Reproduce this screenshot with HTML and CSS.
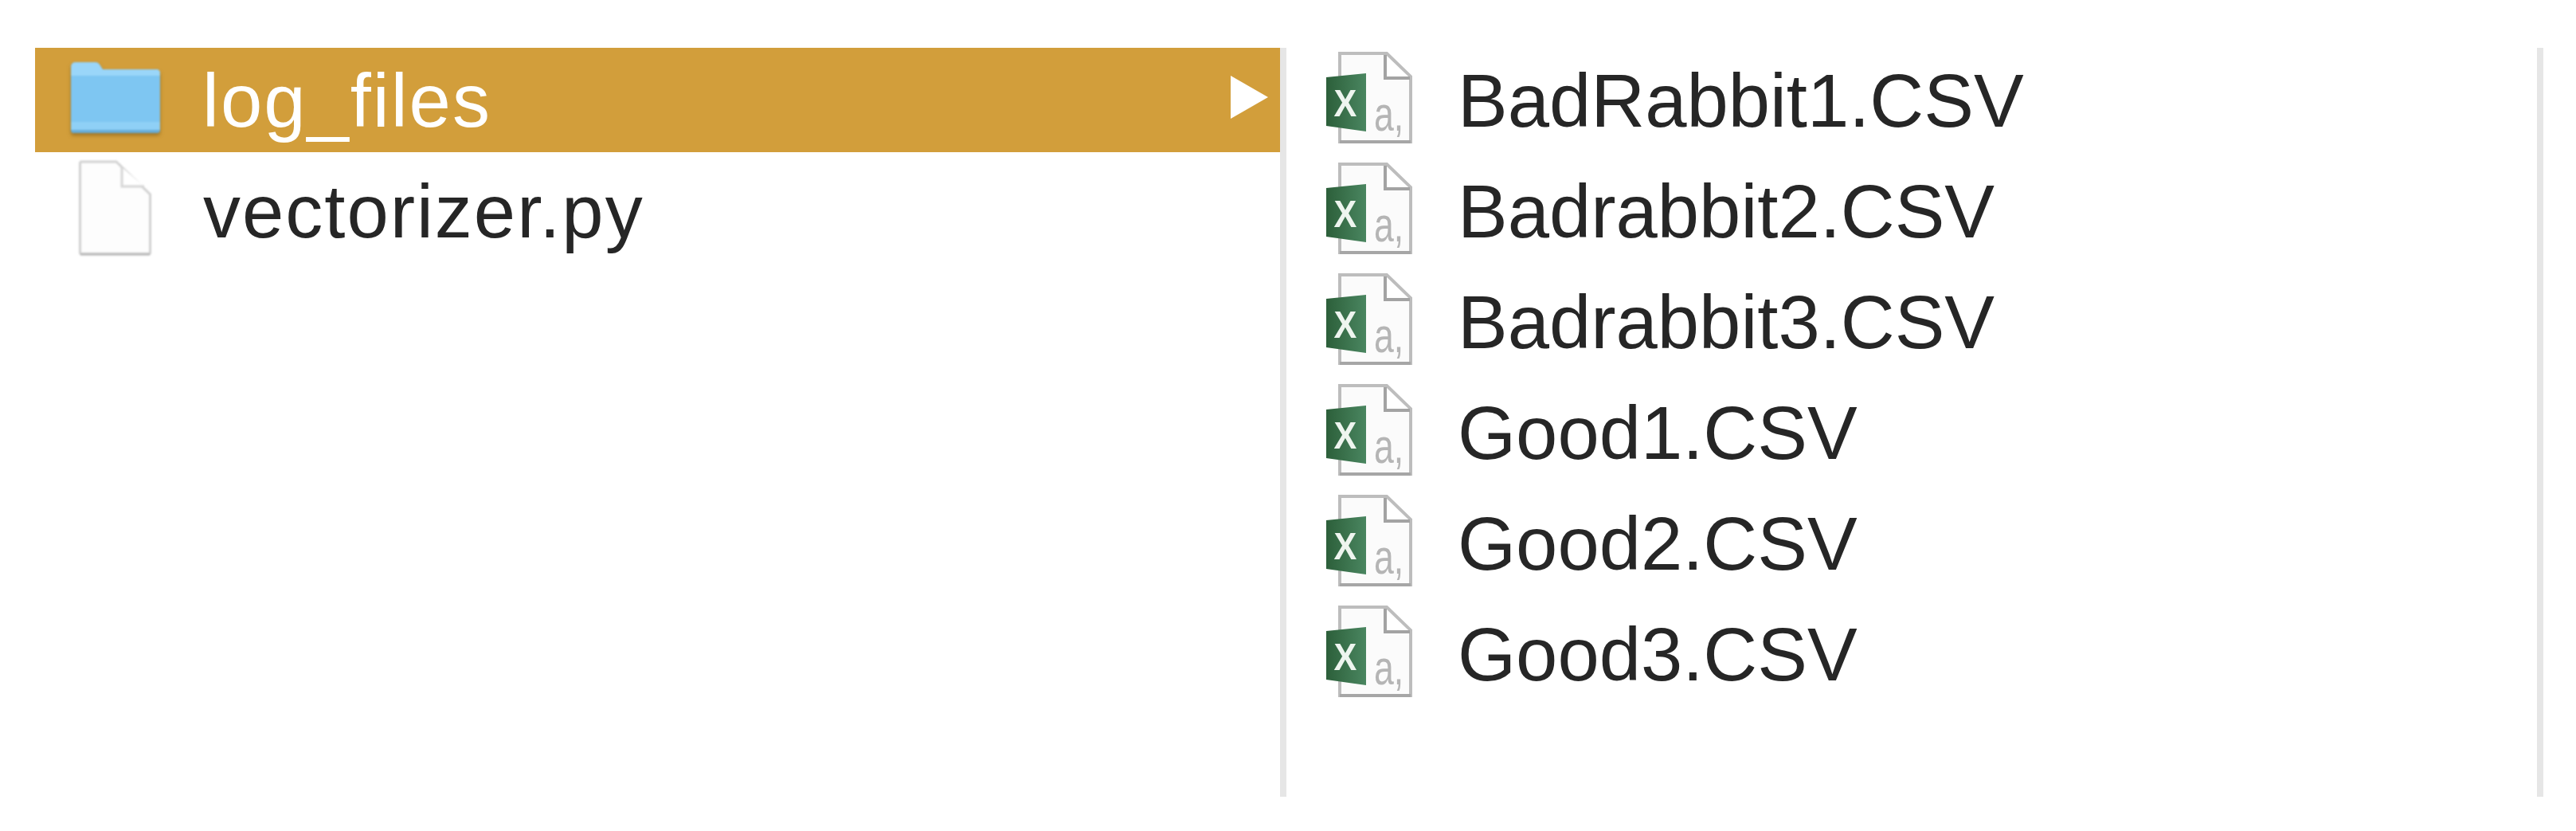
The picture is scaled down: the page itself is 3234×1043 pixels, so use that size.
FILE: index.html
```html
<!DOCTYPE html>
<html>
  <head>
    <title>log_files</title>
    <meta name="viewport" content="width=device-width, initial-scale=1" />
    <link rel="stylesheet" href="styles.css">
  </head>
  <body>
    <!-- shared icon for the csv rows -->
    <svg class="defs" width="0" height="0">
      <defs>
        <linearGradient id="green" x1="0" x2="1" y1="0" y2="0">
          <stop offset="0" stop-color="#2c5f3a" />
          <stop offset="1" stop-color="#4a8660" />
        </linearGradient>
        <symbol id="csv-icon" viewBox="0 0 108 116">
          <path d="M17 2H76L106 31V113H17Z" fill="#fbfbfb" stroke="#bdbdbd" stroke-width="4" />
          <path d="M17 113H106" stroke="#a6a6a6" stroke-width="4" />
          <path d="M74 4V33H105" fill="#fff" stroke="#a3a3a3" stroke-width="4" />
          <text class="csv-a" transform="translate(60 99) scale(0.72 1)">a,</text>
          <path d="M0 32L50 27V100L0 93Z" fill="url(#green)" />
          <text class="csv-x" transform="translate(24 81) scale(0.9 1)">X</text>
        </symbol>
      </defs>
    </svg>

    <div id="container">
      <!-- left column -->
      <div class="column column-left">
        <div class="row row-selected">
          <svg class="icon-folder" viewBox="0 0 116 96">
            <path d="M3 10Q3 3 9 3H33Q37 3 39 6L43 12H110Q115 12 115 17V88Q115 92 110 92H7Q3 92 3 88Z" fill="#7ec6f2" />
            <path d="M3 10Q3 3 9 3H33Q37 3 39 6L43 12H110Q115 12 115 17V20H3Z" fill="#9ad6f9" />
            <rect x="3" y="78" width="112" height="10" fill="#8fd0f6" />
            <path d="M3 88H115Q115 92 110 92H7Q3 92 3 88Z" fill="#68add9" />
          </svg>
          <span class="name">log_files</span>
          <span class="chevron"></span>
        </div>
        <div class="row">
          <svg class="icon-file" viewBox="0 0 96 122">
            <path d="M3.5 5Q3.500 3 5.500 3H49L91.500 44V117Q91.500 119 89.500 119H5.500Q3.500 119 3.500 117Z" fill="#fdfdfd" stroke="#d2d2d2" stroke-width="3" />
            <path d="M4 119H91" stroke="#b9b9b9" stroke-width="3" />
            <path d="M56 10V34H84" fill="#fff" stroke="#d6d6d6" stroke-width="3" />
          </svg>
          <span class="name">vectorizer.py</span>
        </div>
      </div>
      <div class="divider"></div>

      <!-- right column -->
      <div class="column column-right">
        <div class="row"><svg class="icon-csv"><use href="#csv-icon" /></svg><span class="name">BadRabbit1.CSV</span></div>
        <div class="row"><svg class="icon-csv"><use href="#csv-icon" /></svg><span class="name">Badrabbit2.CSV</span></div>
        <div class="row"><svg class="icon-csv"><use href="#csv-icon" /></svg><span class="name">Badrabbit3.CSV</span></div>
        <div class="row"><svg class="icon-csv"><use href="#csv-icon" /></svg><span class="name">Good1.CSV</span></div>
        <div class="row"><svg class="icon-csv"><use href="#csv-icon" /></svg><span class="name">Good2.CSV</span></div>
        <div class="row"><svg class="icon-csv"><use href="#csv-icon" /></svg><span class="name">Good3.CSV</span></div>
      </div>
      <div class="divider"></div>
    </div>
  </body>
</html>
```

FILE: styles.css
```css
* {
  margin: 0;
  padding: 0;
  box-sizing: border-box;
}

body {
  width: 100%;
  background-color: #fff;
  font-family: "Liberation Sans", Arial, sans-serif;
  overflow: hidden;
}

.defs {
  position: absolute;
}

#container {
  display: flex;
  height: 1000px;
  padding: 60px 0 0 44px;
}

.divider {
  width: 8px;
  background-color: #e6e6e6;
}

.column {
  display: flex;
  flex-direction: column;
  gap: 8px;
}

.column-left {
  width: 1563px;
}

.column-right {
  width: 1570px;
}

.row {
  display: flex;
  align-items: center;
  flex: none;
  height: 131px;
  color: #262626;
}

.row-selected {
  background-color: #d29e3b;
  color: #fff;
}

.name {
  padding-top: 3px;
  font-size: 94px;
  line-height: 1;
  filter: blur(0.6px);
}

.column-left .name {
  margin-left: 52px;
  letter-spacing: 2px;
}

.column-right .name {
  margin-left: 57px;
}

/* icons */
.icon-folder {
  width: 116px;
  height: 96px;
  margin: 0 0 5px 42px;
  filter: blur(1px) drop-shadow(0 3px 2px rgba(110, 75, 10, 0.5));
}

.icon-file {
  width: 96px;
  height: 122px;
  margin: 0 10px 8px 53px;
  filter: blur(0.8px);
}

.icon-csv {
  width: 108px;
  height: 116px;
  margin: 0 0 5px 50px;
  filter: blur(0.7px);
}

.csv-a {
  font-family: "Liberation Sans", Arial, sans-serif;
  font-size: 62px;
  fill: #b5b5b5;
}

.csv-x {
  font-family: "Liberation Sans", Arial, sans-serif;
  font-size: 48px;
  font-weight: bold;
  fill: #eef5ef;
  text-anchor: middle;
}

.chevron {
  width: 0;
  height: 0;
  margin: 0 15px 8px auto;
  border-style: solid;
  border-width: 27px 0 27px 47px;
  border-color: transparent transparent transparent #fff;
}
```
